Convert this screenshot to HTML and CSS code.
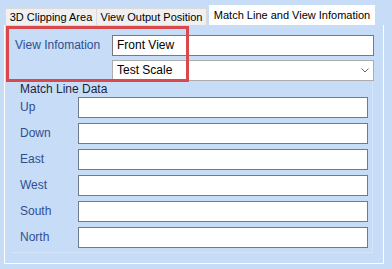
FILE: index.html
```html
<!DOCTYPE html>
<html lang="en">
<head>
<meta charset="UTF-8">
<title>Match Line and View Infomation</title>
<link rel="stylesheet" href="styles.css">
</head>
<body>

<div class="dialog">
    <!-- tab strip -->
    <div class="tabs">
        <div class="tab tab--clip">3D Clipping Area</div>
        <div class="tab tab--output">View Output Position</div>
        <div class="tab tab--active">Match Line and View Infomation</div>
    </div>

    <div class="panel">
        <!-- view info -->
        <div class="view-info">
            <div class="label">View Infomation</div>
            <div class="field">Front View</div>
            <div class="field combo">
                <span>Test Scale</span>
                <svg viewBox="0 0 8 5"><path d="M0.5 0.5 4 4 7.5 0.5" fill="none" stroke="#666" stroke-width="1"></path></svg>
            </div>
        </div>

        <!-- match line data -->
        <div class="group">
            <div class="group-title">Match Line Data</div>
            <div class="rows">
                <div class="label">Up</div><div class="field field--focus"></div>
                <div class="label">Down</div><div class="field"></div>
                <div class="label">East</div><div class="field"></div>
                <div class="label">West</div><div class="field"></div>
                <div class="label">South</div><div class="field"></div>
                <div class="label">North</div><div class="field"></div>
            </div>
        </div>

        <div class="highlight"></div>
    </div>
</div>

</body>
</html>
```

FILE: styles.css
```css
:root {
    --bg: #c6dcf7;
    --label: #2f4f8f;
}

html, body {
    margin: 0;
    background-color: var(--bg);
}

.dialog {
    width: 392px;
    height: 269px;
    font-family: "Liberation Sans", Arial, sans-serif;
    font-size: 12px;
    color: #000;
}

/* --- tabs --- */
.tabs {
    display: flex;
    align-items: flex-end;
    height: 25px;
    padding-left: 5px;
    box-sizing: border-box;
}

.tab {
    height: 17px;
    line-height: 16px;
    font-size: 11px;
    text-align: center;
    background-color: #f0f0f0;
    border: 1px solid #dadada;
    border-bottom: none;
    box-sizing: border-box;
    white-space: nowrap;
}

.tab--clip {
    width: 92px;
}

.tab--output {
    width: 110px;
    border-left: none;
}

.tab--active {
    width: 166px;
    height: 20px;
    line-height: 19px;
    margin-left: 2px;
    background-color: #fff;
    border-color: #fff;
}

/* --- panel --- */
.panel {
    position: relative;
    margin-left: 4px;
    width: 380px;
    height: 239px;
    border: 1px solid #fff;
    border-top: none;
    box-sizing: border-box;
}

.view-info {
    display: grid;
    grid-template-columns: 97px 1fr;
    row-gap: 4px;
    padding: 10px 9px 0 10px;
}

.view-info .combo {
    grid-column: 2;
}

.label {
    color: var(--label);
    line-height: 21px;
    white-space: nowrap;
}

.field {
    height: 21px;
    line-height: 19px;
    padding: 0 4px;
    background-color: #fff;
    border: 1px solid #7a7a7a;
    box-sizing: border-box;
}

.field--focus {
    border-color: #1f7ccc;
}

.combo {
    display: flex;
    align-items: center;
    justify-content: space-between;
    border-color: #adadad;
}

.combo svg {
    width: 8px;
    height: 5px;
    margin-right: 0;
}

/* --- match line group --- */
.group {
    margin: 0 10px 0 7px;
    padding: 0 4px 4px 8px;
    border-right: 1px solid #d6e6fa;
    border-bottom: 1px solid #d6e6fa;
}

.group-title {
    line-height: 16px;
    color: #1c2540;
}

.rows {
    display: grid;
    grid-template-columns: 58px 1fr;
    row-gap: 5px;
}

.rows .field {
    border-color: #6e7b8b;
}

/* --- red annotation box --- */
.highlight {
    position: absolute;
    left: 1px;
    top: 1px;
    width: 183px;
    height: 56px;
    border: 3px solid #d9494b;
    box-sizing: border-box;
    pointer-events: none;
}
```
